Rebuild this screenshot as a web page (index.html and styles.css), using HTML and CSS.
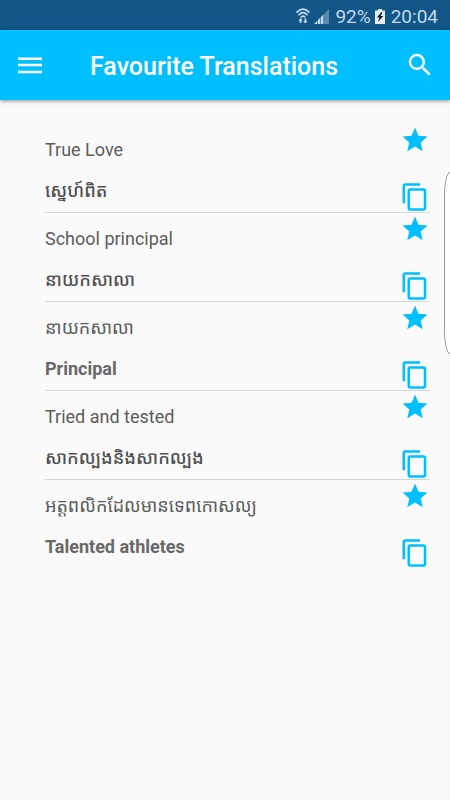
FILE: index.html
```html
<!DOCTYPE html>
<html lang="en">
<head>
<meta charset="utf-8">
<meta name="viewport" content="width=device-width, initial-scale=1">
<title>Favourite Translations</title>
<link rel="stylesheet" href="styles.css">
</head>
<body>
<svg class="defs" aria-hidden="true">
  <symbol id="star" viewBox="0 0 24 24"><path d="M12 17.27 18.18 21l-1.64-7.03L22 9.24l-7.19-.61L12 2 9.19 8.63 2 9.24l5.46 4.73L5.82 21z"/></symbol>
  <symbol id="copy" viewBox="0 0 24 24"><path d="M16 1H4c-1.100 0-2 .9-2 2v14h2V3h12V1zm3 4H8c-1.100 0-2 .9-2 2v14c0 1.100.9 2 2 2h11c1.100 0 2-.9 2-2V7c0-1.100-.9-2-2-2zm0 16H8V7h11v14z"/></symbol>
</svg>
<div class="status">
  <svg class="wifi" viewBox="0 0 14 16" aria-hidden="true">
    <g fill="none" stroke="currentColor" stroke-width="1.700" stroke-linecap="round"><path d="M1 4.200Q7-1.800 13 4.200M3 6.700Q7 2.700 11 6.700M5.200 9Q7 7.200 8.800 9"/></g>
    <path fill="currentColor" d="M4.500 10 6.700 12.500H5.400V15H3.600V12.500H2.300zM8.500 10.500h1.800V13h1.400l-2.300 2.500L7.100 13h1.400z"/>
  </svg>
  <svg class="signal" viewBox="0 0 15 15" aria-hidden="true"><path fill="currentColor" opacity=".4" d="M15 0v15H0z"/><path fill="currentColor" d="M9 6v9H0z"/><path stroke="#115687" stroke-width=".6" d="M3.500 10v5M6.500 7v8"/></svg>
  <span>92%</span>
  <svg class="battery" viewBox="0 0 10 15" aria-hidden="true"><path fill="#e4eef6" d="M3 0h4v1.500h3V15H0V1.500h3z"/><path fill="#0c1c2a" d="M6.500 3 1.800 8.500h2.600L3 13l5.300-6H5.700L7.500 3z"/></svg>
  <span>20:04</span>
</div>
<header class="bar">
  <button class="tool" aria-label="Menu"><svg viewBox="0 0 24 24"><path d="M2.400 6h19.200v2H2.400zM2.400 11h19.200v2H2.400zM2.400 16.500h19.200v2H2.400z"/></svg></button>
  <h1>Favourite Translations</h1>
  <button class="tool" aria-label="Search"><svg viewBox="0 0 24 24"><path d="M15.500 14h-.79l-.28-.27A6.470 6.470 0 0 0 16 9.500 6.500 6.500 0 1 0 9.500 16c1.610 0 3.090-.59 4.230-1.570l.27.28v.79l5 4.990L20.490 19l-4.990-5zm-6 0C7.010 14 5 11.990 5 9.500S7.010 5 9.500 5 14 7.010 14 9.500 11.990 14 9.500 14z"/></svg></button>
</header>
<main>
  <ul class="list">
    <li><div class="words"><p>True Love</p><p class="result" lang="km">ស្នេហ៍ពិត</p></div><div class="actions"><button aria-label="Remove favourite"><svg><use href="#star"/></svg></button><button aria-label="Copy"><svg><use href="#copy"/></svg></button></div></li>
    <li><div class="words"><p>School principal</p><p class="result" lang="km">នាយកសាលា</p></div><div class="actions"><button aria-label="Remove favourite"><svg><use href="#star"/></svg></button><button aria-label="Copy"><svg><use href="#copy"/></svg></button></div></li>
    <li><div class="words"><p lang="km">នាយកសាលា</p><p class="result">Principal</p></div><div class="actions"><button aria-label="Remove favourite"><svg><use href="#star"/></svg></button><button aria-label="Copy"><svg><use href="#copy"/></svg></button></div></li>
    <li><div class="words"><p>Tried and tested</p><p class="result" lang="km">សាកល្បងនិងសាកល្បង</p></div><div class="actions"><button aria-label="Remove favourite"><svg><use href="#star"/></svg></button><button aria-label="Copy"><svg><use href="#copy"/></svg></button></div></li>
    <li><div class="words"><p lang="km">អត្តពលិកដែលមានទេពកោសល្យ</p><p class="result">Talented athletes</p></div><div class="actions"><button aria-label="Remove favourite"><svg><use href="#star"/></svg></button><button aria-label="Copy"><svg><use href="#copy"/></svg></button></div></li>
  </ul>
</main>
<div class="edge-handle"></div>
</body>
</html>
```
FILE: styles.css
```css
* { box-sizing: border-box; }
body {
  margin: 0;
  min-height: 100vh;
  background: #fafafa;
  color: #5c5c5c;
  font-family: Roboto, "Noto Sans Khmer", "Khmer OS", "Noto Sans", sans-serif;
  font-size: 18px;
  overflow-x: hidden;
}
.defs { position: absolute; width: 0; height: 0; }
button {
  display: block;
  padding: 0;
  border: 0;
  background: none;
  color: inherit;
  cursor: pointer;
}
button svg {
  display: block;
  width: 30px;
  height: 30px;
  fill: currentColor;
}
.status {
  display: flex;
  align-items: center;
  justify-content: flex-end;
  gap: 4px;
  height: 30px;
  padding: 2px 12px 0;
  background: #115687;
  color: #c3d9ea;
  font-size: 19px;
}
.wifi { width: 14px; height: 16px; }
.signal { width: 15px; height: 15px; margin-right: 2px; }
.battery { width: 10px; height: 15px; }
.status span:last-child { margin-left: 2px; }
.bar {
  display: flex;
  align-items: center;
  height: 70px;
  padding: 0 15px;
  background: #00bfff;
  color: #fff;
  box-shadow: 0 1px 4px rgba(0, 0, 0, .45);
}
.bar h1 {
  flex: 1;
  margin: 0;
  padding: 4px 0 0 45px;
  font-size: 25px;
  font-weight: 500;
  line-height: 30px;
}
.list {
  list-style: none;
  margin: 0;
  padding: 24px 20px 0 45px;
}
.list li {
  display: flex;
  justify-content: space-between;
  height: 89px;
  border-bottom: 1px solid #d6d6d6;
}
.list li:last-child { border-bottom-color: transparent; }
.words p {
  margin: 0;
  padding-top: 15px;
  line-height: 22px;
  height: 41px;
  white-space: nowrap;
}
.words .result {
  color: #686868;
  font-weight: 700;
}
.words .result:lang(km) {
  color: #505050;
  font-weight: 500;
}
.actions {
  display: flex;
  flex-direction: column;
  justify-content: space-between;
  padding-top: 1px;
  color: #00bfff;
}
.edge-handle {
  position: absolute;
  top: 172px;
  right: 0;
  width: 6px;
  height: 182px;
  border: 1px solid #999;
  border-right: 0;
  border-radius: 6px 0 0 6px / 24px 0 0 24px;
  background: #fdfdfd;
}
```
